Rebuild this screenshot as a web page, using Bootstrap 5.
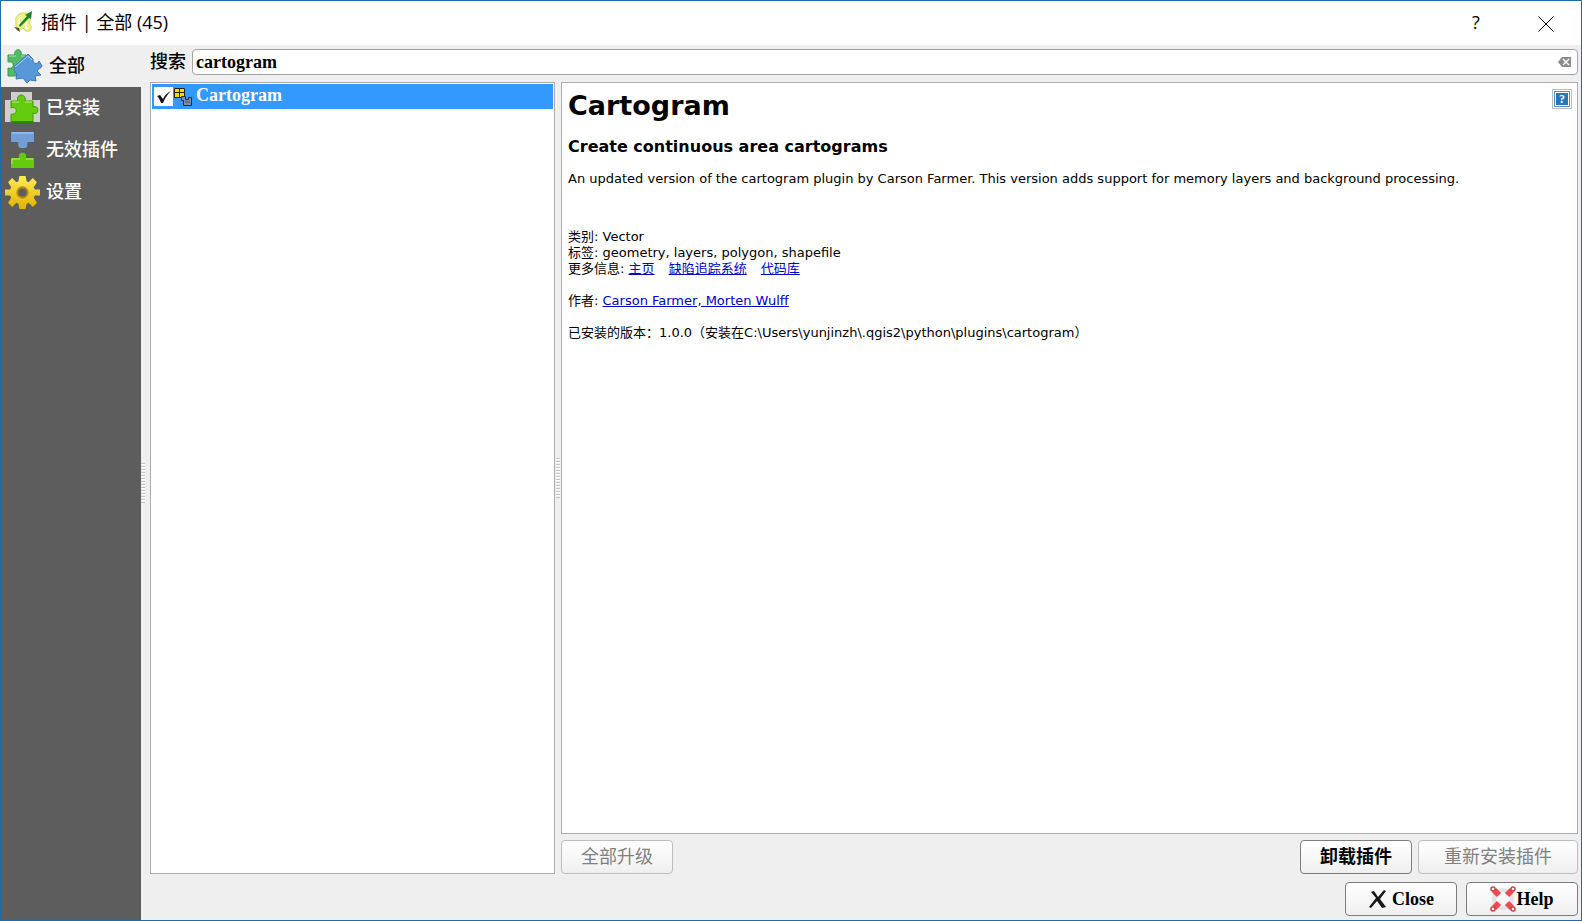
<!DOCTYPE html>
<html lang="zh-CN">
<head>
<meta charset="utf-8">
<meta name="viewport" content="width=device-width, initial-scale=1">
<title>插件 | 全部 (45)</title>
<link href="https://cdn.jsdelivr.net/npm/bootstrap@5.3.0/dist/css/bootstrap.min.css" rel="stylesheet">
<style>
  body { font-family: "Liberation Serif", "Noto Sans CJK SC", serif; font-size: 18px; line-height: 24px; color: #000; background: #efefef; }
  .window { min-height: 100vh; border: 1px solid #1f6ba5; }
  .titlebar { height: 44px; background: #fff; font-family: "Open Sans", "Noto Sans CJK SC", sans-serif; padding: 0 0 2px 12px; }
  .titlebar h1 { font-size: 18px; line-height: 24px; }
  .title-btn { width: 70px; height: 42px; border: 0; background: transparent; padding: 0; font-size: 18px; color: #000; }
  .sidebar { width: 140px; background: #5d5d5d; }
  .sidebar .nav-link { height: 42px; padding: 0 0 0 4px; color: #fff; border-radius: 0; font-weight: 500; gap: 6px; }
  .sidebar .nav-link.active { background: #efefef; color: #000; }
  .grip { width: 9px; }
  .grip-v { width: 6px; }
  .grip span { width: 4px; height: 40px; background: repeating-linear-gradient(#c4c4c4 0 1px, #fff 1px 2px, #efefef 2px 3px); }
  .main-area { padding: 4px 3px 4px 0; }
  .search-label { width: 42px; font-weight: 500; }
  .search-box { height: 26px; border: 1px solid #a3a3a3; border-radius: 4px; background: #fff; padding: 0 6px 0 3px; }
  .search-box input { border: 0; outline: 0; padding: 0; background: transparent; font-family: inherit; font-weight: 700; font-size: 18px; height: 24px; }
  .clear-btn { border: 0; padding: 0; background: transparent; line-height: 0; }
  .panes { padding: 7px 0 8px; }
  .pane { background: #fff; border: 1px solid #aeaeae; }
  .left-pane { width: 405px; padding: 1px; }
  .plugin-row { height: 25px; background: #3399ff; color: #fff; font-weight: 700; padding-left: 2px; }
  .plugin-row label { line-height: 22px; }
  .tick { appearance: none; width: 19px; height: 19px; margin: 0; background: #fff; }
  .tick-wrap { width: 19px; height: 19px; }
  .tick-wrap svg { position: absolute; left: 0; top: 0; pointer-events: none; }
  .details { font-family: "DejaVu Sans", "Noto Sans CJK SC", sans-serif; font-size: 13px; line-height: 16px; padding: 6px; }
  .details h2 { font-size: 27px; line-height: 34px; font-weight: 700; margin: 0 0 14px; }
  .details h3 { font-size: 16px; line-height: 20px; font-weight: 700; margin: 0 0 14px; }
  .details p { margin: 0 0 16px; }
  .details .summary { margin-bottom: 42px; }
  .details a { color: #0000c8; }
  .details .links a { margin-right: 10px; }
  .help-badge { width: 20px; height: 20px; border: 1px solid #bcbcbc; padding: 0; background: #fff; line-height: 0; top: 6px; right: 5px; }
  .qbtn { height: 34px; min-width: 112px; padding: 0 12px; border: 1px solid #7d7d7d; border-radius: 4px; background: linear-gradient(#fff, #efefef); color: #000; font-family: inherit; font-size: 18px; line-height: 24px; font-weight: 700; }
  .qbtn:disabled { border-color: #bebebe; color: #808080; font-weight: 400; }
  .qbtn-wide { min-width: 160px; }
  .actions { gap: 6px; padding-top: 6px; }
  .dialog-actions { gap: 9px; }
</style>
</head>
<body>
<div class="window d-flex flex-column">
  <header class="titlebar d-flex align-items-center">
    <svg width="20" height="24" viewBox="0 0 20 24" aria-hidden="true">
      <path d="M9 3C4 4 2 8 3 12c-1 4 1 7 4 8l3-2 3 3c4 1 6-1 5-5-1-2-2-2-1-5s0-7-2-8z" fill="#f0f080" stroke="#d3da68"/>
      <path d="M7 7c-2 3-1 7 1 9m6-4c-2 2-2 5 1 7" fill="none" stroke="#fff" stroke-width="2"/>
      <path d="M6 15 14 6l-2-1 7-4-1 8-2-1-9 9z" fill="#17852c"/>
      <path d="m1 17 5 1 1 4-3-2z" fill="#4a5226"/>
    </svg>
    <h1 class="fw-normal mb-0 ms-2 me-auto">插件 | 全部 (45)</h1>
    <button class="title-btn" type="button" aria-label="帮助">?</button>
    <button class="title-btn" type="button" aria-label="关闭窗口"><svg width="16" height="16" viewBox="0 0 16 16"><path d="m.5.5 15 15m0-15-15 15" stroke="#000"/></svg></button>
  </header>

  <div class="d-flex flex-grow-1">
    <nav class="sidebar nav flex-column flex-nowrap flex-shrink-0">
      <a class="nav-link active d-flex align-items-center" href="#all">
        <svg width="38" height="36" viewBox="0 0 38 36" aria-hidden="true">
          <path d="M3 7h7C8 0 18 0 16 7h5v8L11 28H3v-8c7 2 7-8 0-6z" fill="#56b968" stroke="#38994d"/>
          <path d="M4 8h7m5 0h4" stroke="#a2dfab"/>
          <path d="M9 19 23 6l5 5c-1 5 5 6 6 2l3 5c-1 3-4 2-5 5l4 4-6 1 1 5-6-1-3 3-4-5-7 1 1-5c-4-2-2-5-3-7z" fill="#5898d8" stroke="#3978bb"/>
          <path d="M10 19 23 8l4 4" fill="none" stroke="#a7cdf1"/>
        </svg>全部</a>
      <a class="nav-link d-flex align-items-center" href="#installed">
        <svg width="35" height="36" viewBox="0 0 35 36" aria-hidden="true">
          <path d="M6 2h21v8h8v22H0V10h6z" fill="#cfcfcb"/>
          <path d="M6 11h7C10 3 22 3 20 11h8v6c6-3 7 9 0 6v9H6v-8c7 2 7-9 0-6z" fill="#62cc0d" stroke="#429c07"/>
          <path d="M7 12h7m6 0h7" stroke="#b6ef83"/>
          <path d="M7 32h21" stroke="#348300" stroke-width="2"/>
        </svg>已安装</a>
      <a class="nav-link d-flex align-items-center" href="#invalid">
        <svg width="35" height="38" viewBox="0 0 35 38" aria-hidden="true">
          <path d="M6 1h23v10h-6c-2 2 1 5-3 6h-5c-3-2-1-4-2-6H6z" fill="#729fd5"/>
          <path d="M7 2h21" stroke="#8db9e7" stroke-width="2"/>
          <path d="M6 27h8c-2-7 9-7 7 0h8v10H6z" fill="#62cc0d"/>
          <path d="M7 33v-5h8m6 0h7" fill="none" stroke="#b6ef83"/>
        </svg>无效插件</a>
      <a class="nav-link d-flex align-items-center" href="#settings">
        <svg width="35" height="35" viewBox="0 0 34 34" aria-hidden="true">
          <defs><linearGradient id="gold" gradientUnits="userSpaceOnUse" x1="0" y1="0" x2="0" y2="34"><stop stop-color="#ffec58"/><stop offset="1" stop-color="#dfb100"/></linearGradient></defs>
          <path d="M14 1h6l1 5 2 1 4-4 4 4-3 5 1 2h5v6h-5l-1 2 3 5-4 4-4-4-2 1-1 5h-6l-1-5-2-1-4 4-4-4 3-5-1-2H0v-6h5l1-2-3-5 4-4 4 4 2-1z" fill="url(#gold)"/>
          <circle cx="17" cy="17" r="5" fill="#5d5d5d" stroke="#b48b12" stroke-width="2"/>
        </svg>设置</a>
    </nav>
    <div class="grip d-flex align-items-center"><span></span></div>

    <main class="main-area flex-grow-1 d-flex flex-column">
      <div class="d-flex align-items-center">
        <label class="search-label" for="q">搜索</label>
        <div class="search-box d-flex align-items-center flex-grow-1">
          <input id="q" class="flex-grow-1" type="text" value="cartogram">
          <button class="clear-btn" type="button" aria-label="清除"><svg width="13" height="10" viewBox="0 0 13 10"><path d="M4 0h9v10H4L0 5z" fill="#8b8b8b"/><path d="m5 2 6 6m0-6-6 6" stroke="#fff" stroke-width="1.500"/></svg></button>
        </div>
      </div>

      <div class="panes d-flex flex-grow-1">
        <section class="pane left-pane flex-shrink-0">
          <div class="plugin-row d-flex">
            <div class="tick-wrap position-relative align-self-center">
              <input class="tick d-block" type="checkbox" id="p1" checked>
              <svg width="19" height="19" viewBox="0 0 19 19" aria-hidden="true"><path d="m3 9 3-1 3 4c2-4 4-6 8-8-4 4-6 7-8 12H7C6 13 5 11 3 9z" fill="#161616"/></svg>
            </div>
            <svg class="align-self-center" width="19" height="19" viewBox="0 0 19 19" aria-hidden="true">
              <path d="M1.500 1.500h10v9h-10zM6.500 1v10M1 5.500h11" fill="#f5dc00" stroke="#222"/>
              <path d="M8.500 9.500h4v3h3v-2h3v8h-8v-5h-2z" fill="#7b8da8" stroke="#26313e"/>
              <path d="M12 15h5" stroke="#3b5779"/>
            </svg>
            <label class="ms-1" for="p1">Cartogram</label>
          </div>
        </section>
        <div class="grip grip-v d-flex align-items-center justify-content-center"><span></span></div>
        <section class="flex-grow-1 d-flex flex-column">
          <article class="pane details position-relative flex-grow-1">
            <button class="help-badge position-absolute" type="button" aria-label="帮助"><svg width="18" height="18" viewBox="0 0 18 18"><path d="M1.500 1.500h15v15h-15z" fill="#fff" stroke="#5b8bbb"/><path d="M3 3h12v12H3z" fill="#2876b5"/><text x="9" y="13" text-anchor="middle" font-family="Liberation Serif" font-weight="700" font-size="12" fill="#fff">?</text></svg></button>
            <h2>Cartogram</h2>
            <h3>Create continuous area cartograms</h3>
            <p class="summary">An updated version of the cartogram plugin by Carson Farmer. This version adds support for memory layers and background processing.</p>
            <div>类别: Vector</div>
            <div>标签: geometry, layers, polygon, shapefile</div>
            <p class="links">更多信息: <a href="#home">主页</a> <a href="#tracker">缺陷追踪系统</a> <a href="#code">代码库</a></p>
            <p>作者: <a href="#author">Carson Farmer, Morten Wulff</a></p>
            <p>已安装的版本：1.0.0（安装在C:\Users\yunjinzh\.qgis2\python\plugins\cartogram）</p>
          </article>
          <div class="actions d-flex">
            <button class="qbtn me-auto" type="button" disabled>全部升级</button>
            <button class="qbtn" type="button">卸载插件</button>
            <button class="qbtn qbtn-wide" type="button" disabled>重新安装插件</button>
          </div>
        </section>
      </div>

      <div class="dialog-actions d-flex justify-content-end">
        <button class="qbtn d-flex align-items-center justify-content-center gap-1" type="button"><svg width="20" height="20" viewBox="0 0 20 20" aria-hidden="true"><path d="M3 3 6 2l4 6 6-7 2 1-6 8 6 8-4 1-5-7-6 7-2-1 7-9z" fill="#181818"/></svg>Close</button>
        <button class="qbtn d-flex align-items-center justify-content-center" type="button"><svg width="26" height="26" viewBox="0 0 26 26" aria-hidden="true">
          <circle cx="13" cy="13" r="9" fill="none" stroke="#e3e3e3" stroke-width="4"/>
          <g stroke="#f04a50" stroke-width="6"><path d="m4 4 5 5m8 8 5 5M22 4l-5 5m-8 8-5 5"/></g>
          <g fill="#fff" stroke="#c9444a" stroke-width="1.500"><circle cx="3" cy="3" r="2"/><circle cx="23" cy="3" r="2"/><circle cx="3" cy="23" r="2"/><circle cx="23" cy="23" r="2"/></g>
        </svg>Help</button>
      </div>
    </main>
  </div>
</div>
<script src="https://cdn.jsdelivr.net/npm/bootstrap@5.3.0/dist/js/bootstrap.bundle.min.js"></script>
</body>
</html>
